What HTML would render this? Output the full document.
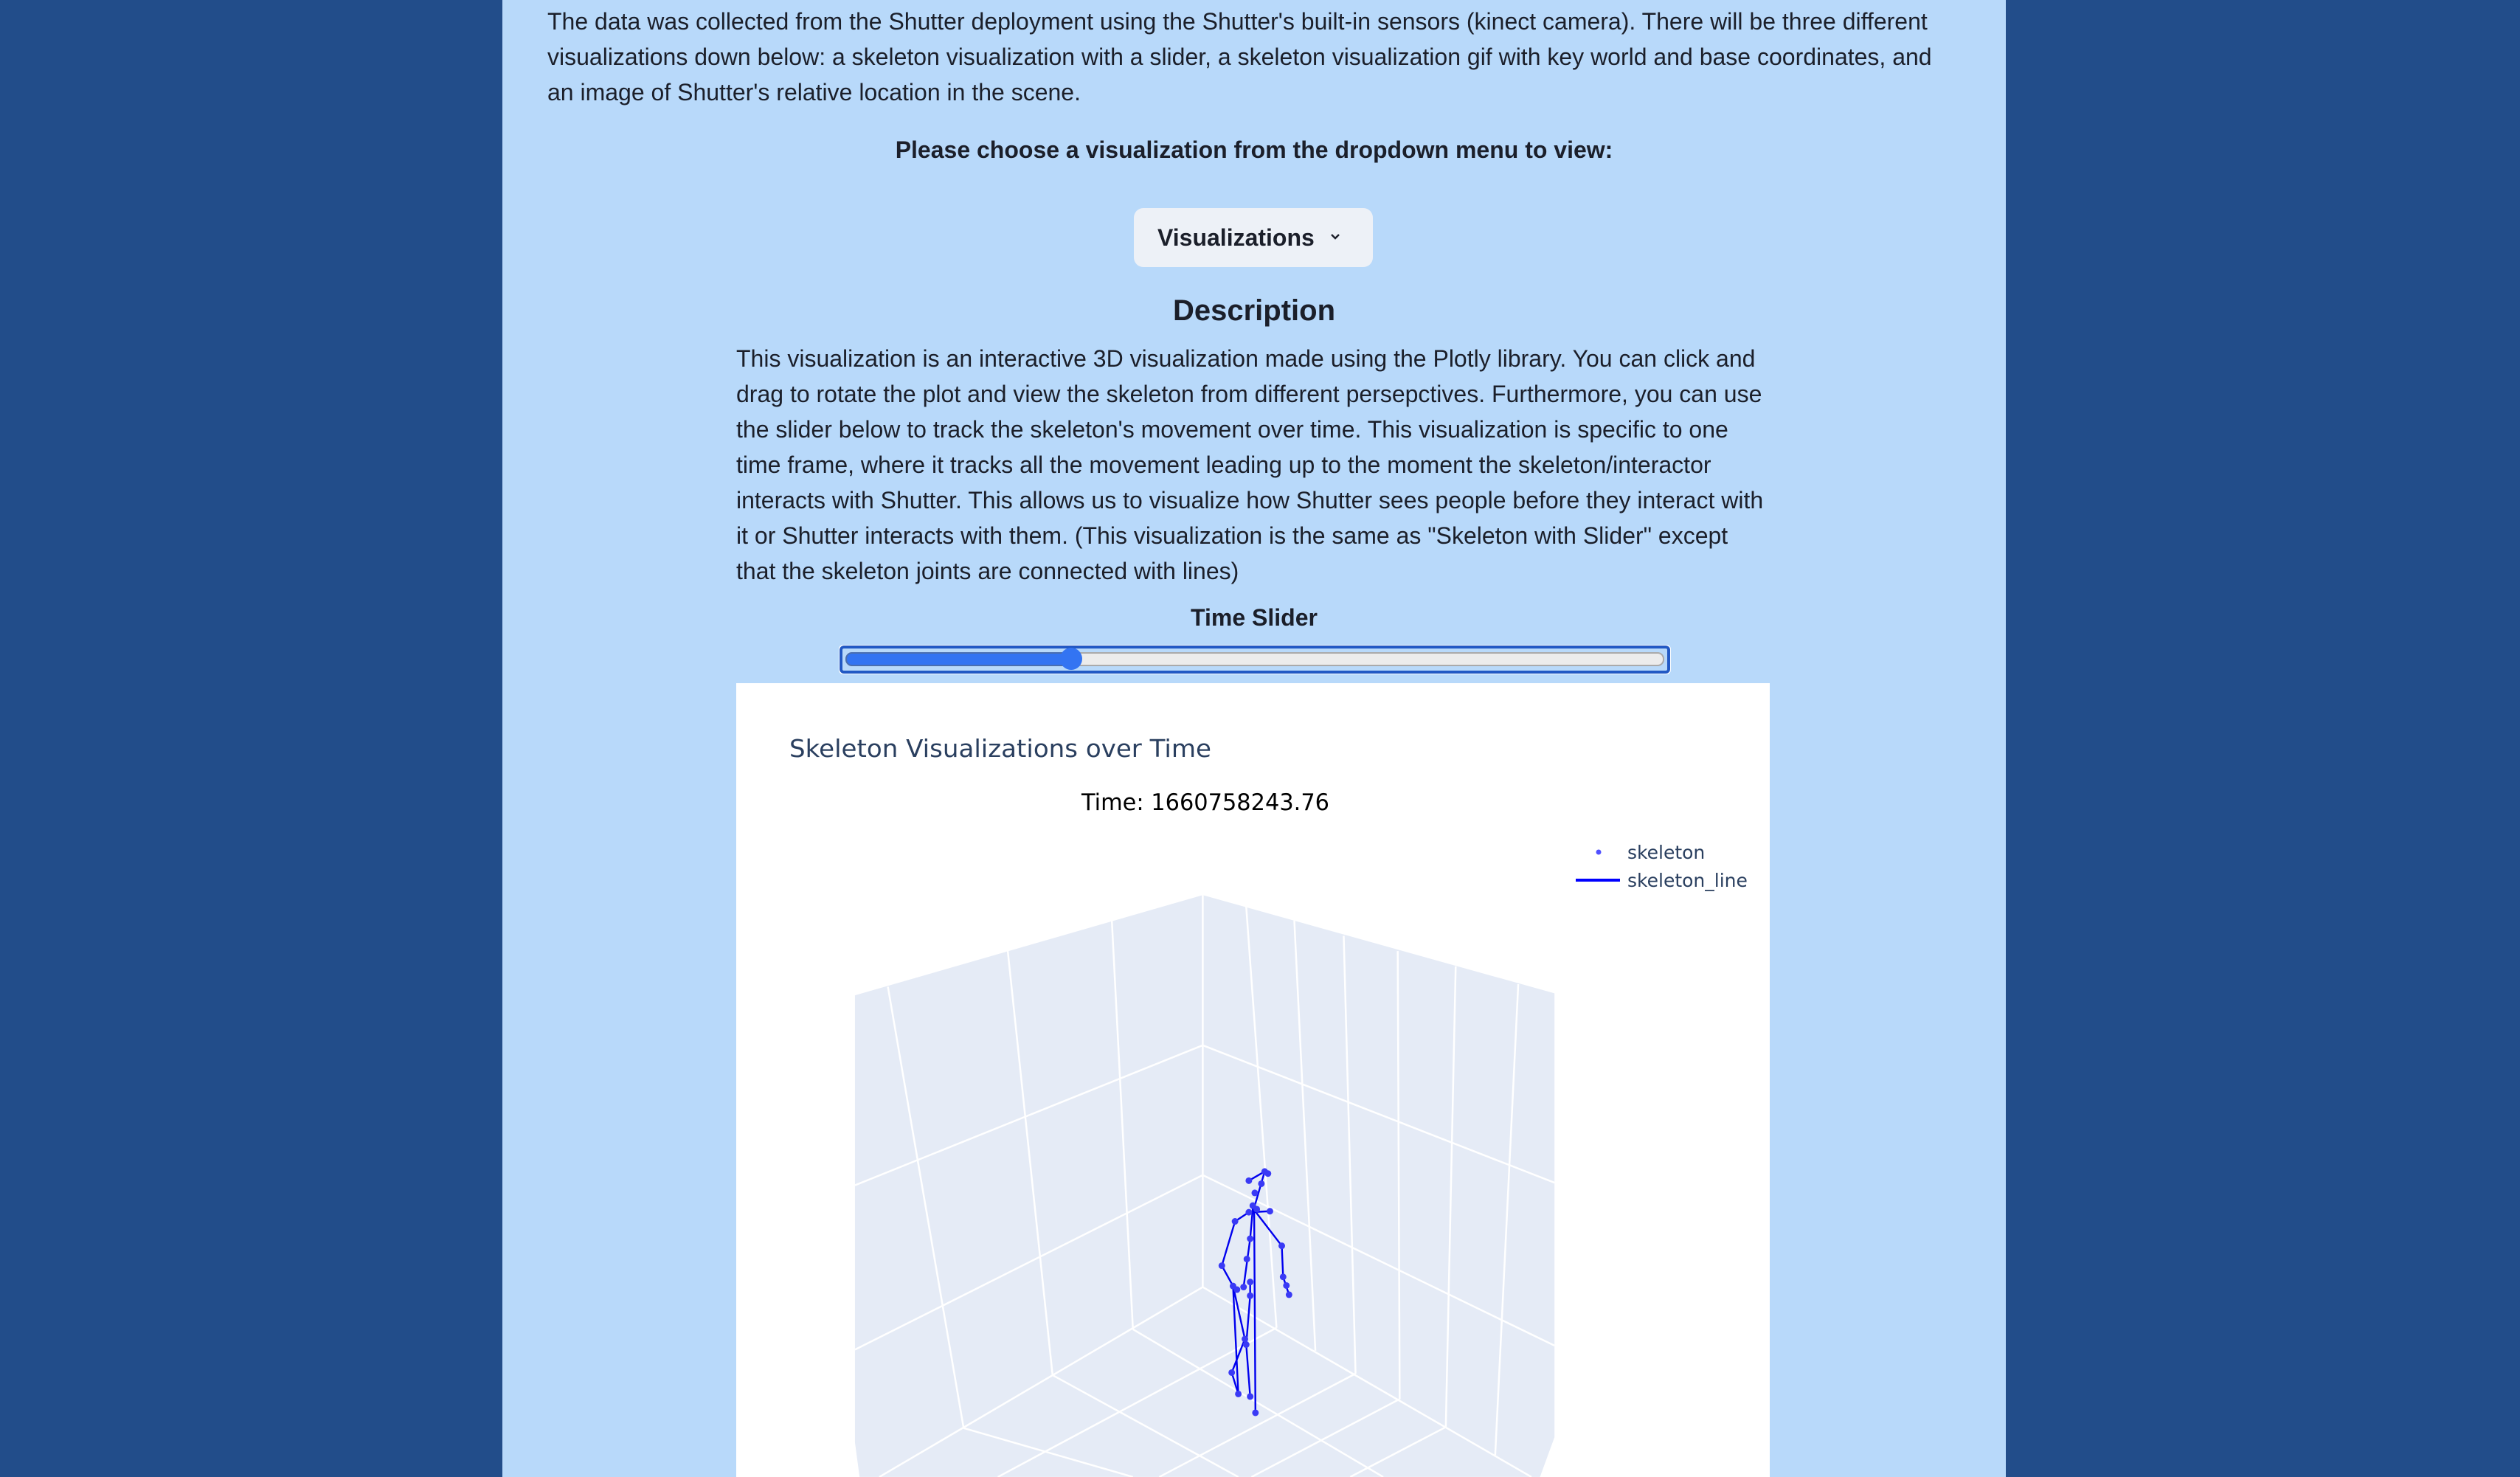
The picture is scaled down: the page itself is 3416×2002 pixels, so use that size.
<!DOCTYPE html>
<html><head><meta charset="utf-8"><style>
html,body{margin:0;padding:0}
body{width:3416px;height:2002px;background:#224d8a;position:relative;overflow:hidden;font-family:"Liberation Sans",Arial,sans-serif;color:#1b1f2a}
#panel{position:absolute;left:681px;top:0;width:2038px;height:2002px;background:#b8d9fa;overflow:hidden}
.p{position:absolute;font-size:32px;line-height:48px;margin:0}
.c{position:absolute;left:0;width:2038px;text-align:center;font-weight:bold;margin:0}
#btn{position:absolute;left:856px;top:282px;width:324px;height:80px;background:#edf1f7;border-radius:13px;font-weight:bold;font-size:32px;line-height:80px;box-sizing:border-box;padding-left:32px}
#plot{position:absolute;left:317px;top:926px;width:1401px;height:1076px;background:#fff;overflow:hidden}
.ns{vector-effect:non-scaling-stroke}
</style></head><body>
<div id="panel">
<p class="p" style="left:61px;top:5px;width:1900px">The data was collected from the Shutter deployment using the Shutter's built-in sensors (kinect camera). There will be three different visualizations down below: a skeleton visualization with a slider, a skeleton visualization gif with key world and base coordinates, and an image of Shutter's relative location in the scene.</p>
<p class="c" style="top:183px;font-size:32px;line-height:40px">Please choose a visualization from the dropdown menu to view:</p>
<div id="btn">Visualizations<svg style="position:absolute;left:266px;top:34px" width="14" height="10" viewBox="0 0 14 10"><path d="M2 2 L7 7 L12 2" fill="none" stroke="#1b1f2a" stroke-width="2.4"/></svg></div>
<p class="c" style="top:398px;font-size:40px;line-height:46px">Description</p>
<p class="p" style="left:317px;top:462px;width:1400px">This visualization is an interactive 3D visualization made using the Plotly library. You can click and drag to rotate the plot and view the skeleton from different persepctives. Furthermore, you can use the slider below to track the skeleton's movement over time. This visualization is specific to one time frame, where it tracks all the movement leading up to the moment the skeleton/interactor interacts with Shutter. This allows us to visualize how Shutter sees people before they interact with it or Shutter interacts with them. (This visualization is the same as "Skeleton with Slider" except that the skeleton joints are connected with lines)</p>
<p class="c" style="top:817px;font-size:32px;line-height:40px">Time Slider</p>
<svg style="position:absolute;left:455px;top:873px" width="1130" height="42">
<rect x="2" y="2" width="1126" height="38" rx="5" fill="#b8d9fa" stroke="#fff" stroke-width="2"/>
<rect x="4" y="4" width="1122" height="34" rx="4" fill="none" stroke="#2259c4" stroke-width="4"/>
<rect x="11" y="12" width="1108" height="17" rx="8" fill="#ececec" stroke="#aaa" stroke-width="2"/>
<rect x="11" y="12" width="305" height="17" rx="8" fill="#3374f2" stroke="#4a6fb0" stroke-width="2"/>
<circle cx="316" cy="20" r="15" fill="#3374f2"/>
</svg>
<div id="plot">
<svg width="1401" height="1076" viewBox="998 926 1401 1076" style="position:absolute;left:0;top:0">
<text x="1070" y="1026" font-family="DejaVu Sans,sans-serif" font-size="33" fill="#2a3f5f" textLength="572" lengthAdjust="spacingAndGlyphs">Skeleton Visualizations over Time</text>
<text x="1466" y="1098" font-family="DejaVu Sans,sans-serif" font-size="31" fill="#000" textLength="336" lengthAdjust="spacingAndGlyphs">Time: 1660758243.76</text>
<circle cx="2167" cy="1155" r="3.5" fill="#5050ff"/>
<text x="2206" y="1164" font-family="DejaVu Sans,sans-serif" font-size="25" fill="#2a3f5f">skeleton</text>
<line x1="2136" y1="1193" x2="2196" y2="1193" stroke="#0000ff" stroke-width="4"/>
<text x="2206" y="1202" font-family="DejaVu Sans,sans-serif" font-size="25" fill="#2a3f5f">skeleton_line</text>
<g transform="translate(1000,920) scale(0.8929,0.69)">
<path d="M178 622 L706 425 L1240 618 L1240 1490 L1218 1568 L185 1568 L178 1500 Z" fill="#e5ebf6"/>
<g stroke="#fff" stroke-width="2.5" fill="none">
<path class="ns" d="M706 425 L706 1195"/>
<path class="ns" d="M706 720 L178 995 M706 720 L1240 990"/>
<path class="ns" d="M706 975 L178 1318 M706 975 L1240 1310"/>
<path class="ns" d="M706 1195 L215 1568 M706 1195 L1205 1568"/>
<path class="ns" d="M228 605 L343 1472 M410 535 L478 1368 M568 475 L600 1278"/>
<path class="ns" d="M772 448 L818 1275 M845 475 L877 1320 M920 505 L938 1365 M1002 535 L1005 1415 M1090 565 L1075 1470 M1185 600 L1150 1525"/>
<path class="ns" d="M343 1472 L600 1568 M478 1368 L760 1568 M600 1278 L980 1568"/>
<path class="ns" d="M818 1275 L395 1568 M938 1365 L640 1568 M1075 1470 L930 1568 M1005 1415 L780 1568"/>
</g>
<g stroke="#0000ee" stroke-width="2.4" fill="none">
<path class="ns" d="M776 986 L800 968 L785 1035 M776 1048 L808 1046 M776 1048 L755 1066 L735 1153 L752 1193 M782 1040 L826 1114 L828 1175 L837 1210 M782 1040 L778 1100 L768 1195 M752 1193 L770 1297 L750 1363 L760 1405 L752 1193 M778 1212 L772 1308 L778 1410 M784 1040 L786 1442 M778 1185 L778 1212"/>
</g>
<g fill="#3a3af5">
<ellipse cx="800" cy="968" rx="5" ry="6.5"/><ellipse cx="805" cy="972" rx="5" ry="6.5"/><ellipse cx="776" cy="986" rx="5" ry="6.5"/><ellipse cx="795" cy="992" rx="5" ry="6.5"/><ellipse cx="785" cy="1010" rx="5" ry="6.5"/><ellipse cx="782" cy="1035" rx="5" ry="6.5"/><ellipse cx="776" cy="1048" rx="5" ry="6.5"/><ellipse cx="788" cy="1042" rx="5" ry="6.5"/><ellipse cx="808" cy="1046" rx="5" ry="6.5"/><ellipse cx="755" cy="1066" rx="5" ry="6.5"/><ellipse cx="735" cy="1153" rx="5" ry="6.5"/><ellipse cx="752" cy="1193" rx="5" ry="6.5"/><ellipse cx="758" cy="1200" rx="5" ry="6.5"/><ellipse cx="778" cy="1100" rx="5" ry="6.5"/><ellipse cx="773" cy="1140" rx="5" ry="6.5"/><ellipse cx="768" cy="1195" rx="5" ry="6.5"/><ellipse cx="778" cy="1185" rx="5" ry="6.5"/><ellipse cx="778" cy="1212" rx="5" ry="6.5"/><ellipse cx="826" cy="1114" rx="5" ry="6.5"/><ellipse cx="828" cy="1175" rx="5" ry="6.5"/><ellipse cx="833" cy="1192" rx="5" ry="6.5"/><ellipse cx="837" cy="1210" rx="5" ry="6.5"/><ellipse cx="770" cy="1297" rx="5" ry="6.5"/><ellipse cx="772" cy="1308" rx="5" ry="6.5"/><ellipse cx="750" cy="1363" rx="5" ry="6.5"/><ellipse cx="760" cy="1405" rx="5" ry="6.5"/><ellipse cx="778" cy="1410" rx="5" ry="6.5"/><ellipse cx="786" cy="1442" rx="5" ry="6.5"/>
</g>
</g>
</svg>
</div>
</div>
</body></html>
